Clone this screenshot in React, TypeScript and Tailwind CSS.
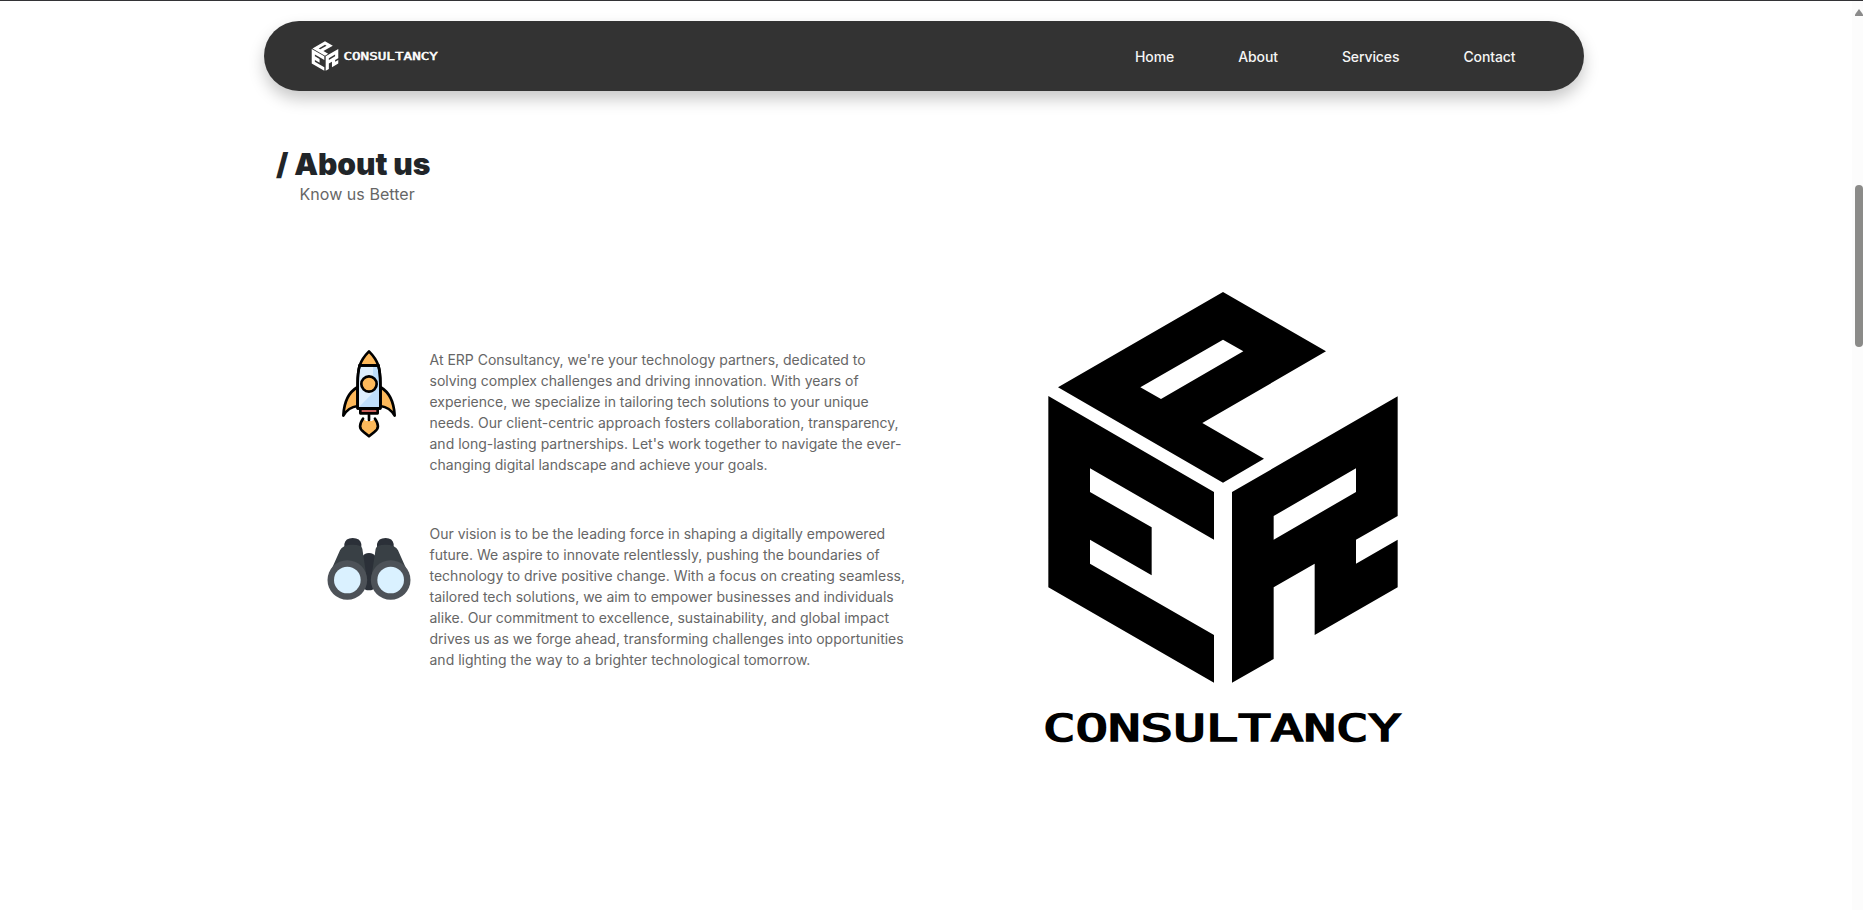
function CubeShapes() {
  return (
    <g fill="currentColor" fillRule="evenodd">
      <path d="M579 66 888 244 517 459 702 566 579 638 84 352ZM579 209 331 352 393 387 640 244Z" />
      <path d="M55 378 552 666V809L180 595V666L365 772V916L180 809V881L552 1095V1238L55 952Z" />
      <path d="M1103 379V738L978 809V881L1103 809V952L854 1095V881L731 952V1167L606 1238V666ZM978 595 731 738V809L978 666Z" />
    </g>
  );
}

function Wordmark({ className }: { className: string }) {
  return (
    <svg viewBox="0 0 1070 88" className={className} role="img" aria-label="Consultancy">
      <text
        x="-7"
        y="84"
        textLength="1076"
        lengthAdjust="spacingAndGlyphs"
        fontFamily="'DejaVu Sans Mono', monospace"
        fontSize="111"
        fill="currentColor"
        stroke="currentColor"
        strokeWidth="5"
      >
        CONSULTANCY
      </text>
    </svg>
  );
}

function Rocket() {
  return (
    <svg viewBox="42 57 270 270" className="h-[90px] w-[90px] shrink-0" stroke="#000" strokeWidth="8" strokeLinejoin="round" strokeLinecap="round">
      <path d="M143 171Q103 194 100 257Q114 232 143 228ZM211 171Q251 194 254 257Q240 232 211 228Z" fill="#fdb95b" />
      <path d="M149 106Q143 128 143 160V235H211V160Q211 128 205 106Z" fill="#bfdffc" />
      <path d="M153 110H189V188L147 231V160Q147 128 153 110Z" fill="#deeffe" stroke="none" />
      <path d="M149 106Q143 128 143 160V235H211V160Q211 128 205 106Z" fill="none" />
      <path d="M177 64Q157 84 149 106H205Q197 84 177 64Z" fill="#fdb95b" />
      <circle cx="177" cy="162" r="23" fill="#fdb95b" />
      <path d="M151 236H203V250H151Z" fill="#c9605d" />
      <path d="M160 266Q140 292 160 305L177 319 194 305Q214 292 195 266L186 273H168Z" fill="#fdb95b" stroke="none" />
      <path d="M159 266Q141 292 160 305L177 319 194 305Q213 292 195 266M177 254V270" fill="none" />
    </svg>
  );
}

function Binoculars() {
  return (
    <svg viewBox="42 9 270 270" className="h-[90px] w-[90px] shrink-0">
      <path d="M155 112Q163 99 177 99Q191 99 199 112V200Q190 211 177 211Q164 211 155 200Z" fill="#2b3038" />
      <path d="M103 80V72Q106 54 128 54Q151 54 154 72V88H103ZM201 88V72Q204 54 227 54Q248 54 251 72V88Z" fill="#2b3038" />
      <path d="M54 172 90 91Q97 74 128 74Q154 74 157 86L171 180ZM300 172 264 91Q257 74 226 74Q200 74 197 86L183 180Z" fill="#394045" />
      <circle cx="112" cy="180" r="59.500" fill="#4d5258" />
      <circle cx="242" cy="180" r="59.500" fill="#4d5258" />
      <circle cx="112" cy="180" r="40" fill="#daf1ff" />
      <circle cx="242" cy="180" r="40" fill="#daf1ff" />
    </svg>
  );
}

const links = ["Home", "About", "Services", "Contact"];

export default function App() {
  return (
    <div className="flex h-[910px] w-full overflow-hidden border-t border-[#333336] bg-white font-['Inter',sans-serif]">
      <div className="w-[1852px] shrink-0 pl-[264px] pt-5">
        <header className="flex h-[70px] w-[1320px] items-center justify-between rounded-full bg-[#333333] pl-[47px] pr-[68.500px] text-white shadow-[0_8px_16px_rgba(0,0,0,0.22)]">
          <div className="flex items-center gap-[5px]">
            <svg viewBox="45 60 1068 1184" className="h-[30px] w-[28px]">
              <CubeShapes />
            </svg>
            <Wordmark className="h-[8px] w-[94px] overflow-visible" />
          </div>
          <nav className="flex gap-16 pt-0.5 text-sm font-medium tracking-[-0.1px] text-[#f5f5f5]">
            {links.map((l) => (
              <a key={l} href="#">{l}</a>
            ))}
          </nav>
        </header>

        <section>
          <div className="pl-3 pt-[55px]">
            <h2 className="text-[30px] leading-[36px] font-black tracking-[-0.060px] text-[#212529]">/ About us</h2>
            <p className="pl-[23.500px] text-base leading-6 tracking-[0.05px] text-[#666666]">Know us Better</p>
          </div>
          <div className="flex pt-[84px]">
            <div className="flex w-[779px] flex-col gap-[48px] pl-[60px] pt-[59px] text-sm leading-[21px] text-[#666666]">
              <div className="flex gap-[15.500px]">
                <Rocket />
                <p className="whitespace-nowrap">
                  At ERP Consultancy, we're your technology partners, dedicated to<br />
                  solving complex challenges and driving innovation. With years of<br />
                  experience, we specialize in tailoring tech solutions to your unique<br />
                  needs. Our client-centric approach fosters collaboration, transparency,<br />
                  and long-lasting partnerships. Let's work together to navigate the ever-<br />
                  changing digital landscape and achieve your goals.
                </p>
              </div>
              <div className="flex gap-[15.500px]">
                <Binoculars />
                <p className="whitespace-nowrap">
                  Our vision is to be the leading force in shaping a digitally empowered<br />
                  future. We aspire to innovate relentlessly, pushing the boundaries of<br />
                  technology to drive positive change. With a focus on creating seamless,<br />
                  tailored tech solutions, we aim to empower businesses and individuals<br />
                  alike. Our commitment to excellence, sustainability, and global impact<br />
                  drives us as we forge ahead, transforming challenges into opportunities<br />
                  and lighting the way to a brighter technological tomorrow.
                </p>
              </div>
            </div>
            <div className="flex w-[360px] flex-col items-center text-black">
              <svg viewBox="39 60 1080 1185" className="h-[395px] w-[360px]">
                <CubeShapes />
              </svg>
              <Wordmark className="mt-[28px] h-[29.300px] w-[356.700px] overflow-visible" />
            </div>
          </div>
        </section>
      </div>
      <div className="flex grow flex-col items-end bg-[#fcfcfc] pt-2">
        <svg viewBox="0 0 8 7" className="h-[7px] w-2">
          <path d="M0 7V5.500L4 0 8 5.500V7Z" fill="#8b8b8b" />
        </svg>
        <div className="mt-[169px] h-[162px] w-2 rounded-full bg-[#8b8b89]" />
      </div>
    </div>
  );
}
